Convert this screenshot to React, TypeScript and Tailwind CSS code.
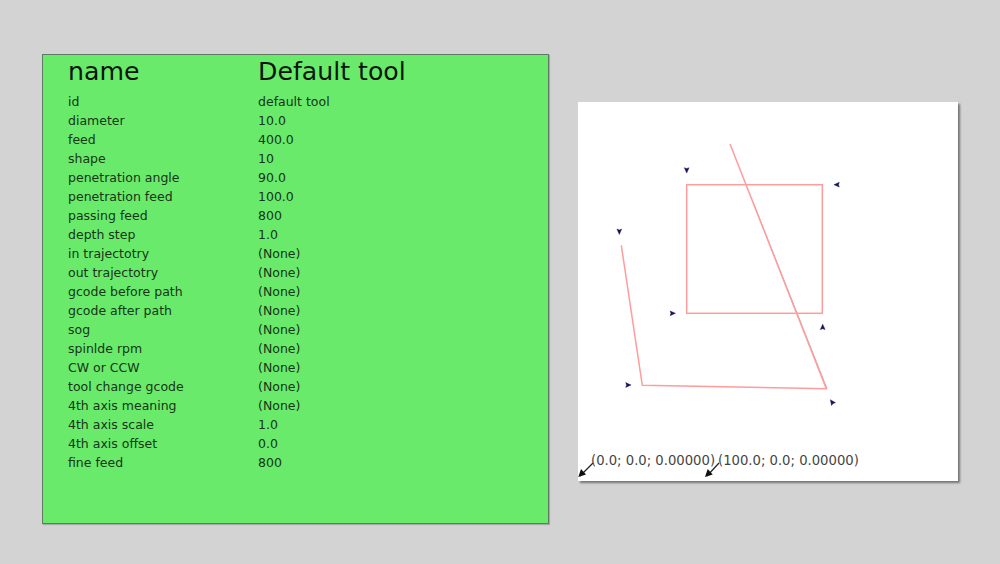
const rows = [
  ["id", "default tool"],
  ["diameter", "10.0"],
  ["feed", "400.0"],
  ["shape", "10"],
  ["penetration angle", "90.0"],
  ["penetration feed", "100.0"],
  ["passing feed", "800"],
  ["depth step", "1.0"],
  ["in trajectotry", "(None)"],
  ["out trajectotry", "(None)"],
  ["gcode before path", "(None)"],
  ["gcode after path", "(None)"],
  ["sog", "(None)"],
  ["spinlde rpm", "(None)"],
  ["CW or CCW", "(None)"],
  ["tool change gcode", "(None)"],
  ["4th axis meaning", "(None)"],
  ["4th axis scale", "1.0"],
  ["4th axis offset", "0.0"],
  ["fine feed", "800"],
];

const Marker = ({ x, y, angle }: { x: number; y: number; angle: number }) => (
  <path
    d="M0 2.8 L-2.4 -2.6 L0 -1.8 L2.4 -2.6 Z"
    fill="#14145a"
    stroke="#14145a"
    strokeWidth="0.4"
    transform={`translate(${x} ${y}) rotate(${angle})`}
  />
);

const Drawing = () => (
  <svg width="380" height="379" viewBox="0 0 380 379" className="block">
    <path d="M175.400 101 L249 286.500" stroke="#b4b4b4" strokeWidth="1" fill="none" />
    <rect x="108.700" y="82.700" width="135.600" height="128.600" stroke="#ff9c9c" strokeWidth="1.5" fill="none" />
    <path d="M152 42 L248.300 286.700 L64.300 283.300 L43.300 143.300" stroke="#ff9c9c" strokeWidth="1.5" fill="none" />
    <Marker x={108.700} y={68.300} angle={0} />
    <Marker x={258.700} y={82.700} angle={90} />
    <Marker x={41.300} y={129.700} angle={0} />
    <Marker x={94.700} y={211.300} angle={-90} />
    <Marker x={244.700} y={225} angle={180} />
    <Marker x={50.300} y={283} angle={-90} />
    <Marker x={254} y={300} angle={145} />
    <path d="M15 361 L2 374" stroke="#222" strokeWidth="1.2" />
    <path d="M0.300 375 L3 367 L8 372.500 Z" fill="#111" />
    <path d="M141 361 L129 374" stroke="#222" strokeWidth="1.2" />
    <path d="M127 375 L129.700 367 L134.700 372.500 Z" fill="#111" />
  </svg>
);

export default function App() {
  return (
    <div className="w-[1000px] h-[564px] bg-[#d3d3d3] flex items-start pl-[42px] pt-[54px] font-['DejaVu_Sans',sans-serif] overflow-hidden">
      <div className="w-[507px] h-[470px] bg-[#69ea6b] border border-[#5f7a60] shadow-[1px_1px_1px_rgba(0,0,0,0.2)] pl-[25px] shrink-0">
        <div className="flex h-[34px] items-center text-[25.200px] text-[#0a160a]">
          <div className="w-[190px]">name</div>
          <div>Default tool</div>
        </div>
        <div className="pt-[4px]">
          {rows.map(([label, value]) => (
            <div key={label} className="flex h-[19px] items-center text-[12.500px] text-[#173517]">
              <div className="w-[190px]">{label}</div>
              <div>{value}</div>
            </div>
          ))}
        </div>
      </div>
      <div className="relative ml-[29px] mt-[48px] w-[380px] h-[379px] bg-white shadow-[2px_2px_2px_rgba(0,0,0,0.45)] shrink-0">
        <Drawing />
        <span className="absolute left-[13px] top-[351px] text-[13.200px] leading-[16px] text-[#444] whitespace-nowrap">(0.0; 0.0; 0.00000)</span>
        <span className="absolute left-[140px] top-[351px] text-[13.200px] leading-[16px] text-[#444] whitespace-nowrap">(100.0; 0.0; 0.00000)</span>
      </div>
    </div>
  );
}
